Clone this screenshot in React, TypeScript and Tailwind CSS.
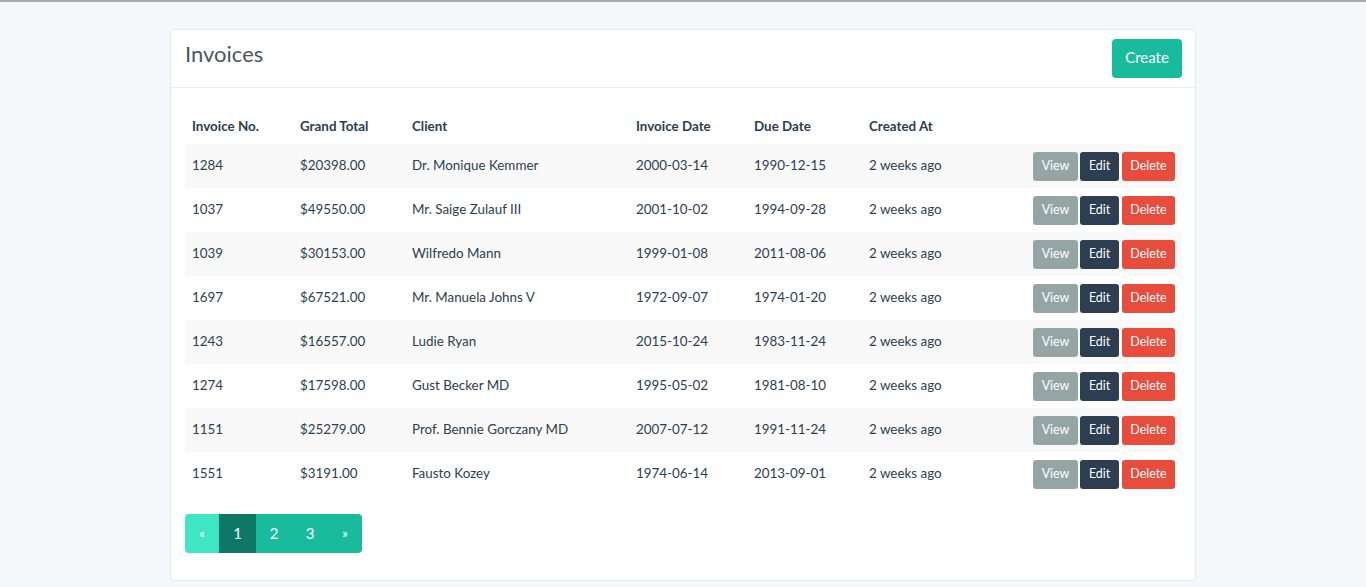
import React from 'react';

interface Invoice {
  number: number;
  total: string;
  client: string;
  invoiceDate: string;
  dueDate: string;
  createdAt: string;
}

const invoices: Invoice[] = [
  { number: 1284, total: '$20398.00', client: 'Dr. Monique Kemmer', invoiceDate: '2000-03-14', dueDate: '1990-12-15', createdAt: '2 weeks ago' },
  { number: 1037, total: '$49550.00', client: 'Mr. Saige Zulauf III', invoiceDate: '2001-10-02', dueDate: '1994-09-28', createdAt: '2 weeks ago' },
  { number: 1039, total: '$30153.00', client: 'Wilfredo Mann', invoiceDate: '1999-01-08', dueDate: '2011-08-06', createdAt: '2 weeks ago' },
  { number: 1697, total: '$67521.00', client: 'Mr. Manuela Johns V', invoiceDate: '1972-09-07', dueDate: '1974-01-20', createdAt: '2 weeks ago' },
  { number: 1243, total: '$16557.00', client: 'Ludie Ryan', invoiceDate: '2015-10-24', dueDate: '1983-11-24', createdAt: '2 weeks ago' },
  { number: 1274, total: '$17598.00', client: 'Gust Becker MD', invoiceDate: '1995-05-02', dueDate: '1981-08-10', createdAt: '2 weeks ago' },
  { number: 1151, total: '$25279.00', client: 'Prof. Bennie Gorczany MD', invoiceDate: '2007-07-12', dueDate: '1991-11-24', createdAt: '2 weeks ago' },
  { number: 1551, total: '$3191.00', client: 'Fausto Kozey', invoiceDate: '1974-06-14', dueDate: '2013-09-01', createdAt: '2 weeks ago' },
];

const cols = [
  { label: 'Invoice No.', width: 'w-[108px]' },
  { label: 'Grand Total', width: 'w-[112px]' },
  { label: 'Client', width: 'w-[224px]' },
  { label: 'Invoice Date', width: 'w-[118px]' },
  { label: 'Due Date', width: 'w-[115px]' },
  { label: 'Created At', width: 'w-[120px]' },
];

const cell = 'px-[7px] pb-[3px] leading-[20px]';

export default function App() {
  return (
    <div
      className="min-h-[587px] bg-[#f5f8fb] border-t-2 border-[#a9abad] text-[#2c3e50]"
      style={{ fontFamily: 'Lato, "Noto Sans", sans-serif' }}
    >
      <div className="w-[1026px] mx-auto mt-[27px] bg-white border border-[#e6e9ec] rounded-[4px]">
        <div className="flex items-start justify-between pl-[14px] pr-[13px] h-[58px] border-b border-[#eceef0]">
          <h1 className="text-[22px] leading-none mt-[13px] text-[#4c5661]">Invoices</h1>
          <button className="mt-[9px] h-[39px] w-[70px] bg-[#18bc9c] text-white text-[15px] rounded-[4px] pb-[2px]">
            Create
          </button>
        </div>
        <div className="pl-[14px] pr-[13px] pt-[19px] pb-[27px]">
          <table className="w-full border-collapse text-[13.4px]">
            <thead>
              <tr className="h-[37px]">
                {cols.map((c) => (
                  <th key={c.label} className={`${c.width} text-left font-bold px-[7px] pt-[1px] align-middle`}>
                    {c.label}
                  </th>
                ))}
                <th />
              </tr>
            </thead>
            <tbody>
              {invoices.map((inv, i) => (
                <tr key={inv.number} className={`h-[44px] ${i % 2 === 0 ? 'bg-[#f9f9f9]' : 'bg-white'}`}>
                  <td className={cell}>{inv.number}</td>
                  <td className={cell}>{inv.total}</td>
                  <td className={cell}>{inv.client}</td>
                  <td className={cell}>{inv.invoiceDate}</td>
                  <td className={cell}>{inv.dueDate}</td>
                  <td className={cell}>{inv.createdAt}</td>
                  <td className="px-[7px]">
                    <div className="flex justify-end gap-[2px] text-[12.4px] text-white">
                      <button className="h-[29px] w-[45px] flex items-center justify-center bg-[#95a5a6] rounded-[3px]">View</button>
                      <button className="h-[29px] w-[39px] flex items-center justify-center bg-[#2c3e50] rounded-[3px] mr-[1px]">Edit</button>
                      <button className="h-[29px] w-[53px] flex items-center justify-center bg-[#e74c3c] rounded-[3px]">Delete</button>
                    </div>
                  </td>
                </tr>
              ))}
            </tbody>
          </table>
          <div className="flex mt-[18px] h-[39px] text-white text-[15px]">
            <span className="w-[34px] flex items-center justify-center bg-[#3ee6c4] rounded-l-[4px] text-[13px]">«</span>
            <span className="w-[37px] flex items-center justify-center bg-[#0f7864]">1</span>
            <span className="w-[36px] flex items-center justify-center bg-[#18bc9c]">2</span>
            <span className="w-[36px] flex items-center justify-center bg-[#18bc9c]">3</span>
            <span className="w-[34px] flex items-center justify-center bg-[#18bc9c] rounded-r-[4px] text-[13px]">»</span>
          </div>
        </div>
      </div>
    </div>
  );
}
